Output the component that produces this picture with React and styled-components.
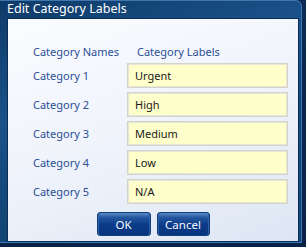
import React from 'react'
import styled, { createGlobalStyle } from 'styled-components'

const Global = createGlobalStyle`
    html, body {
        margin: 0;
        padding: 0;
        background: #0a2244;
        overflow: hidden;
    }
    body {
        font-family: "Noto Sans", "Open Sans", sans-serif;
    }
`

const Desktop = styled.div`
    width: 306px;
    height: 247px;
    background: linear-gradient(180deg, #0c2a52 0%, #0a2246 100%);
`

const Window = styled.div`
    width: 302px;
    height: 243px;
    box-sizing: border-box;
    padding: 0 4px 5px 8px;
    border-top-right-radius: 7px;
    background: linear-gradient(160deg, #0e3a68 0%, #1a5289 35%, #124677 60%, #0f4576 100%);
    box-shadow: inset -1px -1px 0 #3a78b4, inset 0 1px 0 #3d77ae;
    display: flex;
    flex-direction: column;
`

const TitleBar = styled.div`
    height: 24px;
    display: flex;
    align-items: center;
    margin-left: -1px;
    color: #ffffff;
    font-size: 12.5px;
    padding-bottom: 2px;
    box-sizing: border-box;
`

const Panel = styled.div`
    flex: 1;
    box-sizing: border-box;
    padding: 15px 10px 5px 25px;
    background: linear-gradient(160deg, #fbfcff 0%, #eef2fa 55%, #dde6f4 100%);
    box-shadow: 0 0 0 1px #0b2d55;
    display: flex;
    flex-direction: column;
`

const Grid = styled.div`
    display: grid;
    grid-template-columns: 94px 161px;
    grid-auto-rows: 25px;
    row-gap: 4px;
    align-items: center;
`

const HeadCell = styled.div`
    color: #2b4f96;
    font-size: 11px;
    line-height: 16px;
    margin-left: ${p => p.$shift || 0}px;
    align-self: end;
    margin-bottom: -1px;
`

const Label = styled.div`
    color: #2b4f96;
    font-size: 11px;
    margin-top: -1px;
`

const Field = styled.input`
    box-sizing: border-box;
    width: 161px;
    height: 25px;
    margin: 0;
    padding: 0 0 0 7px;
    border: 1px solid #d3d3c9;
    box-shadow: inset 0 0 0 1px #e6e6d8;
    background: #ffffcc;
    color: #1a1a1a;
    font-family: inherit;
    font-size: 11px;
    outline: none;
`

const Buttons = styled.div`
    display: flex;
    justify-content: center;
    gap: 6px;
    margin-top: 8px;
    margin-left: -15px;
`

const Button = styled.button`
    width: ${p => p.$w}px;
    height: 24px;
    border: 1px solid #113f7e;
    border-radius: 3px;
    background: linear-gradient(180deg, #5a8bc8 0%, #24579f 20%, #0b3a88 55%, #08357f 100%);
    color: #f4f8ff;
    font-family: inherit;
    font-size: 11.5px;
    padding: 0;
    box-shadow: inset 1px 0 0 #2b5fa8, inset -1px 0 0 #2b5fa8;
    cursor: pointer;
`

const rows = [
    ['Category 1', 'Urgent'],
    ['Category 2', 'High'],
    ['Category 3', 'Medium'],
    ['Category 4', 'Low'],
    ['Category 5', 'N/A'],
]

export default function App() {
    return (
        <Desktop>
            <Global />
            <Window>
                <TitleBar>Edit Category Labels</TitleBar>
                <Panel>
                    <Grid>
                        <HeadCell>Category Names</HeadCell>
                        <HeadCell $shift={10}>Category Labels</HeadCell>
                        {rows.map(([name, value]) => (
                            <React.Fragment key={name}>
                                <Label>{name}</Label>
                                <Field defaultValue={value} />
                            </React.Fragment>
                        ))}
                    </Grid>
                    <Buttons>
                        <Button $w={54}>OK</Button>
                        <Button $w={53}>Cancel</Button>
                    </Buttons>
                </Panel>
            </Window>
        </Desktop>
    )
}
